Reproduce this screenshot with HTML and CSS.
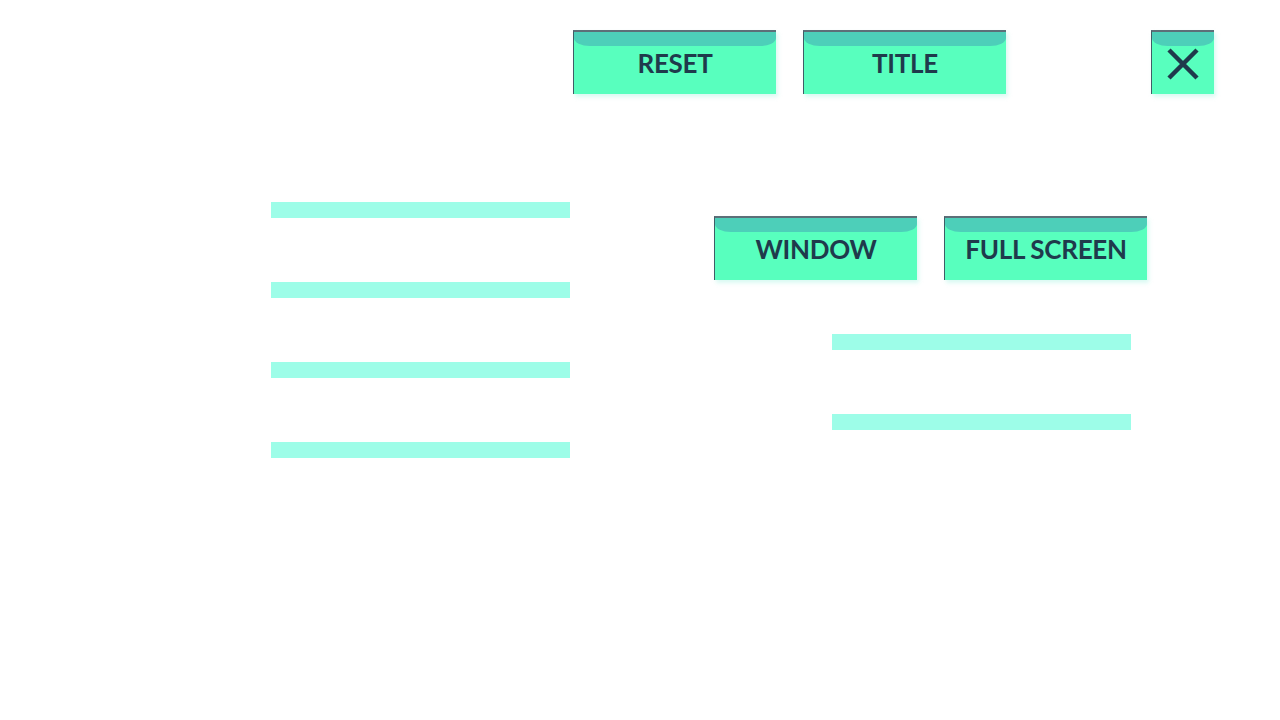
FILE: index.html
```html
<!DOCTYPE html>
<html lang="en">
<head>
    <meta charset="UTF-8">
    <meta name="viewport" content="width=device-width, initial-scale=1.0">
    <title>Settings</title>
    <link rel="stylesheet" href="styles.css">
</head>
<body>
    <div class="top-bar">
        <div class="top-buttons">
            <button class="menu-btn">RESET</button>
            <button class="menu-btn">TITLE</button>
        </div>
        <button class="menu-btn close-btn" aria-label="Close">
            <svg width="34" height="34" viewBox="0 0 34 34">
                <path d="M3 3 L31 31 M31 3 L3 31" stroke="#1f3a4c" stroke-width="4.5" fill="none"/>
            </svg>
        </button>
    </div>

    <div class="content">
        <div class="slider-list">
            <div class="slider"></div>
            <div class="slider"></div>
            <div class="slider"></div>
            <div class="slider"></div>
        </div>

        <div class="display-panel">
            <div class="mode-buttons">
                <button class="menu-btn">WINDOW</button>
                <button class="menu-btn">FULL SCREEN</button>
            </div>
            <div class="slider-list small">
                <div class="slider"></div>
                <div class="slider"></div>
            </div>
        </div>
    </div>
</body>
</html>
```

FILE: styles.css
```css
body {
    margin: 0;
    background: #ffffff;
    font-family: Lato, "Open Sans", sans-serif;
}

.top-bar {
    display: flex;
    padding-top: 30px;
    padding-left: 573px;
}

.top-buttons {
    display: flex;
    gap: 27px;
}

.menu-btn {
    position: relative;
    width: 203px;
    height: 64px;
    padding: 0;
    background-color: #58ffbe;
    color: #1f3a4c;
    border: none;
    border-top: 2px solid #5d6f78;
    border-left: 1px solid #3f5d66;
    box-shadow: 2px 3px 4px rgba(150, 240, 220, 0.35);
    font-family: Lato, "Open Sans", sans-serif;
    font-weight: bold;
    font-size: 26px;
    letter-spacing: -0.3px;
    display: flex;
    align-items: center;
    justify-content: center;
    overflow: hidden;
    cursor: pointer;
}

.menu-btn::before {
    content: "";
    position: absolute;
    top: 0;
    left: 0;
    right: 0;
    height: 14px;
    background-color: #4dcfb9;
    border-radius: 0 0 16px 16px / 0 0 8px 8px;
}

.close-btn {
    width: 63px;
    margin-left: 145px;
    padding-top: 2px;
}

.close-btn svg {
    position: relative;
}

.content {
    display: flex;
    margin-top: 108px;
    padding-left: 271px;
}

.slider-list {
    display: flex;
    flex-direction: column;
    gap: 64px;
}

.slider {
    width: 299px;
    height: 16px;
    background-color: #9dfde8;
}

.display-panel {
    margin-left: 144px;
    padding-top: 14px;
}

.mode-buttons {
    display: flex;
    gap: 27px;
}

.slider-list.small {
    margin-top: 54px;
    margin-left: 118px;
}
```
